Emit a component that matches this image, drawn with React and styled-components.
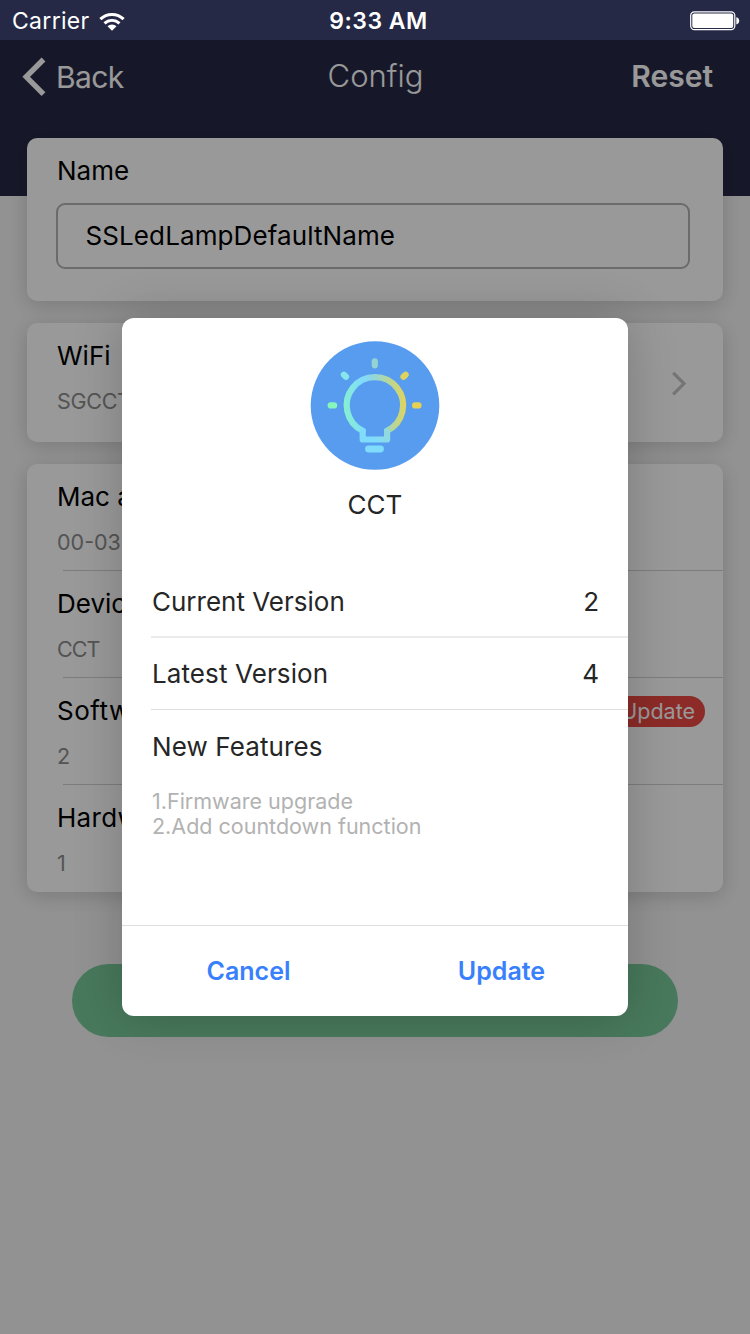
import React from 'react';
import styled, { createGlobalStyle } from 'styled-components';

const GlobalStyle = createGlobalStyle`
  *, *::before, *::after { box-sizing: border-box; }
  html, body { margin: 0; padding: 0; }
  body {
    background: #f4f4f4;
    font-family: Inter, "Liberation Sans", sans-serif;
    color: #000;
    overflow: hidden;
  }
  button, input { font: inherit; color: inherit; margin: 0; padding: 0; border: 0; background: none; }
`;

const Screen = styled.div`
  position: relative;
  display: flex;
  flex-direction: column;
  width: 750px;
  height: 1334px;
  background: #f4f4f4;
  overflow: hidden;
`;

/* The status bar stays above the dimming layer. */
const StatusBar = styled.div`
  position: relative;
  z-index: 3;
  flex: none;
  display: grid;
  grid-template-columns: 1fr auto 1fr;
  align-items: center;
  height: 40px;
  padding: 1px 10px 0 12px;
  background: #262946;
  color: #fff;
`;

const Carrier = styled.div`
  display: flex;
  align-items: center;
  gap: 9px;
  font-size: 23px;
  line-height: 40px;
  letter-spacing: 0.3px;
`;

const Clock = styled.div`
  font-size: 23px;
  font-weight: 600;
  line-height: 40px;
  letter-spacing: 0.5px;
  padding-left: 5px;
`;

const BatterySlot = styled.div`
  display: flex;
  justify-content: flex-end;
`;

const Header = styled.header`
  flex: none;
  height: 155.5px;
  background: #262946;
  color: #fff;
`;

const NavBar = styled.nav`
  display: grid;
  grid-template-columns: 1fr auto 1fr;
  align-items: center;
  height: 73px;
  padding: 0 20px;
`;

const BackButton = styled.button`
  display: flex;
  align-items: center;
  gap: 8px;
  font-size: 30px;
  line-height: 38px;
  letter-spacing: -0.6px;
`;

const NavTitle = styled.h1`
  margin: 0 0 2px 1px;
  font-size: 31px;
  font-weight: 300;
  line-height: 38px;
  letter-spacing: 0;
`;

const ResetButton = styled.button`
  justify-self: end;
  margin: 0 17px 1px 0;
  font-size: 30px;
  font-weight: 600;
  line-height: 39px;
  letter-spacing: 0;
`;

const Content = styled.main`
  display: flex;
  flex-direction: column;
  gap: 22px;
  margin-top: -58px;
  padding: 0 27px;
`;

const Card = styled.section`
  flex: none;
  height: ${(p) => p.$height};
  border-radius: 10px;
  background: #fff;
  box-shadow: 0 4px 20px rgba(0, 0, 0, 0.17);
`;

const Label = styled.div`
  font-size: 26px;
  font-weight: 370;
  line-height: 32px;
  letter-spacing: ${(p) => p.$spacing || '0'};
  white-space: nowrap;
`;

const SubLabel = styled.div`
  margin-top: 15px;
  font-size: 21.5px;
  font-weight: 370;
  line-height: 28px;
  letter-spacing: ${(p) => p.$spacing || '0'};
  color: #8c8c8c;
  white-space: nowrap;
`;

const NameField = styled.div`
  padding: 17.5px 33px 0 30px;
`;

const NameInput = styled.input`
  display: block;
  width: 634px;
  height: 66px;
  margin: 16px 0 0 -1px;
  padding: 0 27.5px 2px;
  border: 2px solid #b2b2b2;
  border-radius: 9px;
  font-size: 26px;
  font-weight: 370;
  letter-spacing: 0.1px;
`;

const Row = styled.div`
  display: flex;
  justify-content: space-between;
  height: ${(p) => p.$height || '107px'};
  padding: 17px 18px 0 30px;
  background: ${(p) =>
    p.$divided ? 'linear-gradient(#d0d0d0, #d0d0d0) 36px 100% / 100% 1px no-repeat' : 'none'};
`;

const Disclosure = styled.div`
  padding: 31px 18px 0 0;
`;

const UpdateBadge = styled.div`
  width: 96px;
  height: 31px;
  margin-top: 1px;
  padding-right: 10px;
  border-radius: 16px;
  background: #e94841;
  color: #fff;
  font-size: 21.5px;
  line-height: 31px;
  letter-spacing: 0;
  text-align: right;
`;

const PrimaryButton = styled.button`
  flex: none;
  width: 606px;
  height: 72.5px;
  margin: 50.5px auto 0;
  border-radius: 37px;
  background: #78ca99;
`;

const Overlay = styled.div`
  position: absolute;
  inset: 0;
  z-index: 2;
  display: flex;
  align-items: center;
  justify-content: center;
  background: rgba(0, 0, 0, 0.4);
`;

const Dialog = styled.div`
  display: flex;
  flex-direction: column;
  width: 506px;
  height: 698px;
  border-radius: 12px;
  background: #fff;
  color: #262626;
  box-shadow: 0 0 50px rgba(0, 0, 0, 0.2);
  overflow: hidden;
`;

const DialogHead = styled.div`
  display: flex;
  flex-direction: column;
  align-items: center;
  height: 247px;
  padding-top: 23px;
`;

const DialogTitle = styled.h2`
  margin: 18px 0 0;
  font-size: 26px;
  font-weight: 370;
  line-height: 34px;
  letter-spacing: 0;
`;

const VersionRow = styled.div`
  display: flex;
  align-items: center;
  justify-content: space-between;
  height: 72.5px;
  margin-left: 29px;
  padding: ${(p) => p.$top || '4px'} 29px 0 1px;
  border-bottom: ${(p) => p.$line || '1px solid #dedede'};
`;

const Features = styled.div`
  flex: 1;
  padding: 21px 30px 0;
`;

const FeatureList = styled.ul`
  margin: 25.5px 0 0;
  padding: 0;
  list-style: none;
  color: #b2b2b2;
  font-size: 21.5px;
  line-height: 25.5px;
`;

const Feature = styled.li`
  letter-spacing: 0;
`;

const DialogFooter = styled.div`
  display: flex;
  height: 91px;
  border-top: 1px solid #dedede;
`;

const DialogAction = styled.button`
  flex: 1;
  color: #3880fc;
  font-size: 25px;
  font-weight: 600;
  letter-spacing: 0;
`;

const WifiIcon = () => (
  <svg width="26" height="19" viewBox="0 0 26 19" fill="none" stroke="#fff">
    <path d="M1.4 7.2A16.6 16.6 0 0 1 24.6 7.2" strokeWidth="3.1" />
    <path d="M5.5 11.4A10.8 10.8 0 0 1 20.5 11.4" strokeWidth="2.9" />
    <path d="M8.5 14.2A6.6 6.6 0 0 1 17.5 14.2L13 18.7Z" fill="#fff" stroke="none" />
  </svg>
);

const BatteryIcon = () => (
  <svg width="50" height="20" viewBox="0 0 50 20">
    <rect x="0.7" y="0.8" width="44.1" height="17.9" rx="3.6" fill="none" stroke="#fff" strokeWidth="1.2" />
    <rect x="2.3" y="2.4" width="40.9" height="14.7" rx="2" fill="#fff" />
    <path d="M46.3 6.2C48.6 6.8 49.2 8.3 49.2 9.8C49.2 11.3 48.6 12.8 46.3 13.4Z" fill="#fff" />
  </svg>
);

const BackIcon = () => (
  <svg width="28" height="40" viewBox="0 0 28 40" fill="none" stroke="#fff" strokeWidth="5.4">
    <path d="M23.5 2.5L6.2 19.8L23.5 37.1" />
  </svg>
);

const ChevronIcon = () => (
  <svg width="16" height="26" viewBox="0 0 16 26" fill="none" stroke="#c3c3c8" strokeWidth="3.2">
    <path d="M2.2 1.8L13 12.6L2.2 23.4" />
  </svg>
);

const BulbIcon = () => (
  <svg width="130" height="129" viewBox="-0.5 0 130 129" fill="none" strokeLinecap="round" strokeLinejoin="round">
    <defs>
      <linearGradient id="ring" gradientUnits="userSpaceOnUse" x1="34" y1="68" x2="95" y2="62">
        <stop offset="0" stopColor="#86f0d0" />
        <stop offset="0.33" stopColor="#80dcfb" />
        <stop offset="0.5" stopColor="#90d6e2" />
        <stop offset="0.75" stopColor="#b4d69c" />
        <stop offset="1" stopColor="#dfd45e" />
      </linearGradient>
      <linearGradient id="socket" gradientUnits="userSpaceOnUse" x1="64" y1="98" x2="80" y2="86">
        <stop offset="0" stopColor="#80dcfb" />
        <stop offset="1" stopColor="#98d9cf" />
      </linearGradient>
    </defs>
    <circle cx="64.5" cy="64.5" r="64.3" fill="#589cf0" />
    <g strokeWidth="6.2">
      <path d="M52.2 89.7A28.2 28.2 0 1 1 76.6 89.7" stroke="url(#ring)" />
      <path d="M52.2 90V98.5H76.6V90" stroke="url(#socket)" />
      <path d="M58 108H70" stroke="#80dcfb" strokeWidth="6.8" />
      <path d="M64.3 20.3V24.3" stroke="#94d3d1" />
      <path d="M33.4 33.7L35.5 35.8" stroke="#86e6ec" />
      <path d="M95.1 33.7L93 35.8" stroke="#ddd460" />
      <path d="M20.2 64.4H23.6" stroke="#86f6ba" />
      <path d="M104.6 64.4H108" stroke="#e6d152" />
    </g>
  </svg>
);

const details = [
  { title: 'Mac address', value: '00-03-7F' },
  { title: 'Device', value: 'CCT', spacing: '-0.9px' },
  { title: 'Software', value: '2', titleSpacing: '0.5px', update: true },
  { title: 'Hardware', value: '1', titleSpacing: '0.3px' },
];

export default function App() {
  return (
    <>
      <GlobalStyle />
      <Screen>
        <StatusBar>
          <Carrier>
            Carrier
            <WifiIcon />
          </Carrier>
          <Clock>9:33 AM</Clock>
          <BatterySlot>
            <BatteryIcon />
          </BatterySlot>
        </StatusBar>
        <Header>
          <NavBar>
            <BackButton>
              <BackIcon />
              Back
            </BackButton>
            <NavTitle>Config</NavTitle>
            <ResetButton>Reset</ResetButton>
          </NavBar>
        </Header>
        <Content>
          <Card $height="163px">
            <NameField>
              <Label>Name</Label>
              <NameInput defaultValue="SSLedLampDefaultName" />
            </NameField>
          </Card>
          <Card $height="119.5px">
            <Row $height="119.5px">
              <div>
                <Label>WiFi</Label>
                <SubLabel $spacing="-0.3px">SGCCT</SubLabel>
              </div>
              <Disclosure>
                <ChevronIcon />
              </Disclosure>
            </Row>
          </Card>
          <Card $height="427.5px">
            {details.map((item, i) => (
              <Row key={item.title} $divided={i < details.length - 1}>
                <div>
                  <Label $spacing={item.titleSpacing}>{item.title}</Label>
                  <SubLabel $spacing={item.spacing}>{item.value}</SubLabel>
                </div>
                {item.update && <UpdateBadge>Update</UpdateBadge>}
              </Row>
            ))}
          </Card>
          <PrimaryButton aria-label="Save" />
        </Content>
        <Overlay>
          <Dialog role="dialog">
            <DialogHead>
              <BulbIcon />
              <DialogTitle>CCT</DialogTitle>
            </DialogHead>
            <VersionRow $line="2px solid #ebebeb">
              <Label>Current Version</Label>
              <Label>2</Label>
            </VersionRow>
            <VersionRow $top="2px">
              <Label $spacing="0.1px">Latest Version</Label>
              <Label>4</Label>
            </VersionRow>
            <Features>
              <Label $spacing="0.1px">New Features</Label>
              <FeatureList>
                <Feature>1.Firmware upgrade</Feature>
                <Feature>2.Add countdown function</Feature>
              </FeatureList>
            </Features>
            <DialogFooter>
              <DialogAction>Cancel</DialogAction>
              <DialogAction>Update</DialogAction>
            </DialogFooter>
          </Dialog>
        </Overlay>
      </Screen>
    </>
  );
}
